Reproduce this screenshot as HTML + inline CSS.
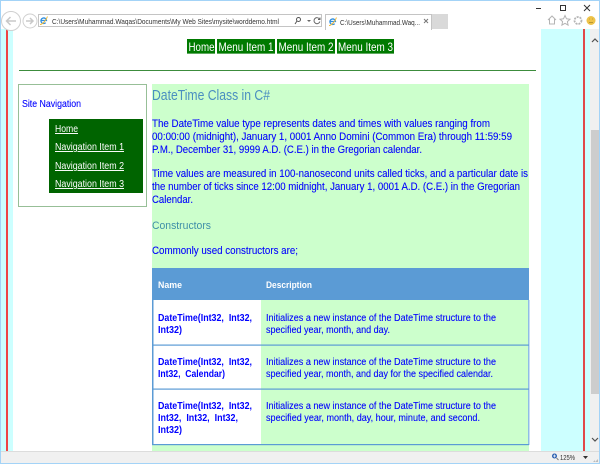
<!DOCTYPE html>
<html><head><meta charset="utf-8"><title>worddemo</title>
<style>
html,body{margin:0;padding:0;background:#fff;overflow:hidden}
svg{display:block;width:600px;height:464px}
text{font-family:"Liberation Sans",sans-serif;white-space:pre}
.p{font-size:11.2px;fill:#0000ff;stroke:#0000ff;stroke-width:.1px}
.t{font-size:9.7px;fill:#0000ff;stroke:#0000ff;stroke-width:.1px}
.b{font-size:9.7px;fill:#0000ff;font-weight:bold}
.n{font-size:9.7px;fill:#fff;text-decoration:underline}
.m{font-size:12px;fill:#fff}
.h{fill:#5b9bd5}
.c{font-size:7.5px;fill:#333}
</style></head><body>
<svg xmlns="http://www.w3.org/2000/svg" width="600" height="464" viewBox="0 0 600 464">
<rect width="600" height="464" fill="#fff"/>
<!-- page bands -->
<rect x="1" y="29" width="12" height="422" fill="#ccffff"/>
<rect x="6" y="29" width="2" height="422" fill="#ef4444"/>
<rect x="541" y="29" width="49" height="422" fill="#ccffff"/>
<rect x="583" y="29" width="2" height="422" fill="#e04848"/>
<!-- scrollbar -->
<rect x="590" y="29" width="10" height="422" fill="#f0f0f0"/>
<rect x="591" y="130" width="9" height="264" fill="#cdcdcd"/>
<path d="M592 42l3-3 3 3" fill="none" stroke="#505050" stroke-width="1.2"/>
<path d="M592 438l3 3 3-3" fill="none" stroke="#505050" stroke-width="1.2"/>
<!-- window border -->
<rect width="600" height="1" fill="#a3d3f7"/>
<rect width="1" height="464" fill="#a3d3f7"/>
<rect x="599" width="1" height="464" fill="#a3d3f7"/>
<rect y="463" width="600" height="1" fill="#a3d3f7"/>
<!-- title buttons -->
<path d="M536 8.500h5" stroke="#333" stroke-width="1"/>
<rect x="560.500" y="5.500" width="5" height="5" fill="none" stroke="#333" stroke-width="1"/>
<path d="M584 5l6 6M590 5l-6 6" stroke="#333" stroke-width="1"/>
<!-- nav buttons -->
<circle cx="11" cy="21" r="9.500" fill="#fff" stroke="#d0d0d0"/>
<path d="M16 21H7M10.500 17l-4 4 4 4" fill="none" stroke="#c8c8c8" stroke-width="1.500"/>
<circle cx="30" cy="21" r="7" fill="#fff" stroke="#d0d0d0"/>
<path d="M26 21h7M30 18l3 3-3 3" fill="none" stroke="#c8c8c8" stroke-width="1.500"/>
<!-- address bar -->
<rect x="38.500" y="14.500" width="283" height="12" fill="#fff" stroke="#c4c4c4"/>
<path d="M41 20.500h5.500a2.800 2.800 0 1 0-.8 2.200" fill="none" stroke="#2f8fe0" stroke-width="1.300"/>
<path d="M40 24.500c2.500 0 6-4 7.500-8" fill="none" stroke="#f0b93a"/>
<text x="52" y="24" class="c" textLength="227" lengthAdjust="spacingAndGlyphs">C:\Users\Muhammad.Waqas\Documents\My Web Sites\mysite\worddemo.html</text>
<circle cx="298.500" cy="19.500" r="2" fill="none" stroke="#555"/>
<path d="M297 21l-2 3" stroke="#555"/>
<path d="M307 20l2 2 2-2z" fill="#666"/>
<path d="M319.500 19a3 3 0 1 0 .4 2.500M320 17.500v2h-2" fill="none" stroke="#666"/>
<!-- tab -->
<rect x="325.500" y="14.500" width="106" height="15" fill="#fff" stroke="#c4c4c4"/>
<rect x="326" y="27" width="105" height="3" fill="#fff"/>
<rect x="432" y="14" width="16" height="15" fill="#d9d9d9"/>
<path d="M330 21.500h5.500a2.800 2.800 0 1 0-.8 2.200" fill="none" stroke="#2f8fe0" stroke-width="1.300"/>
<path d="M329 25.500c2.500 0 6-4 7.500-8" fill="none" stroke="#f0b93a"/>
<text x="340" y="25" class="c" textLength="80" lengthAdjust="spacingAndGlyphs">C:\Users\Muhammad.Waq...</text>
<path d="M424 19l4 4M428 19l-4 4" stroke="#777"/>
<!-- toolbar icons -->
<path d="M548 20l4-4 4 4M549.500 19v5h5v-5" fill="none" stroke="#b4b4b4"/>
<path d="M565 15.500l1.500 3.300 3.500.4-2.600 2.400.7 3.500-3.100-1.800-3.100 1.800.7-3.500-2.600-2.400 3.500-.4z" fill="none" stroke="#b4b4b4"/>
<circle cx="578" cy="20.500" r="3.500" fill="none" stroke="#b4b4b4" stroke-width="1.800" stroke-dasharray="2 1"/>
<circle cx="591" cy="20.500" r="4.500" fill="#eec34a"/>
<path d="M589 19h.8M592 19h.8M589 22.500h4" stroke="#a98a2a" stroke-width=".8"/>
<!-- top menu -->
<g>
<rect x="187" y="39" width="28" height="15" fill="#007a00"/><rect x="187" y="53" width="28" height="1" fill="#5fa85f"/>
<rect x="217" y="39" width="58" height="15" fill="#007a00"/><rect x="217" y="53" width="58" height="1" fill="#5fa85f"/>
<rect x="277" y="39" width="58" height="15" fill="#007a00"/><rect x="277" y="53" width="58" height="1" fill="#5fa85f"/>
<rect x="337" y="39" width="57" height="15" fill="#007a00"/><rect x="337" y="53" width="57" height="1" fill="#5fa85f"/>
<text x="188.500" y="51" class="m" textLength="26" lengthAdjust="spacingAndGlyphs">Home</text>
<text x="218.500" y="51" class="m" textLength="55" lengthAdjust="spacingAndGlyphs">Menu Item 1</text>
<text x="278.500" y="51" class="m" textLength="55" lengthAdjust="spacingAndGlyphs">Menu Item 2</text>
<text x="338" y="51" class="m" textLength="55" lengthAdjust="spacingAndGlyphs">Menu Item 3</text>
</g>
<rect x="19" y="70" width="517" height="1" fill="#3c8c3c"/>
<!-- side nav -->
<rect x="18.500" y="84.500" width="128" height="122" fill="#fff" stroke="#2f7f2f" stroke-dasharray="1 1"/>
<text x="22" y="107" class="t" textLength="59" lengthAdjust="spacingAndGlyphs">Site Navigation</text>
<rect x="49" y="119" width="94" height="74" fill="#006400"/>
<text x="55" y="132" class="n" textLength="23" lengthAdjust="spacingAndGlyphs">Home</text>
<text x="55" y="150" class="n" textLength="69" lengthAdjust="spacingAndGlyphs">Navigation Item 1</text>
<text x="55" y="169" class="n" textLength="69" lengthAdjust="spacingAndGlyphs">Navigation Item 2</text>
<text x="55" y="187" class="n" textLength="69" lengthAdjust="spacingAndGlyphs">Navigation Item 3</text>
<!-- content -->
<rect x="152" y="84" width="377" height="367" fill="#ccffcc"/>
<text x="152" y="100" font-size="14.500" fill="#4a8fc0" textLength="118" lengthAdjust="spacingAndGlyphs">DateTime Class in C#</text>
<text x="152" y="127" class="p" textLength="338" lengthAdjust="spacingAndGlyphs">The DateTime value type represents dates and times with values ranging from</text>
<text x="152" y="140" class="p" textLength="360" lengthAdjust="spacingAndGlyphs">00:00:00 (midnight), January 1, 0001 Anno Domini (Common Era) through 11:59:59</text>
<text x="152" y="153" class="p" textLength="270" lengthAdjust="spacingAndGlyphs">P.M., December 31, 9999 A.D. (C.E.) in the Gregorian calendar.</text>
<text x="152" y="177" class="p" textLength="376" lengthAdjust="spacingAndGlyphs">Time values are measured in 100-nanosecond units called ticks, and a particular date is</text>
<text x="152" y="190" class="p" textLength="368" lengthAdjust="spacingAndGlyphs">the number of ticks since 12:00 midnight, January 1, 0001 A.D. (C.E.) in the Gregorian</text>
<text x="152" y="203" class="p" textLength="41" lengthAdjust="spacingAndGlyphs">Calendar.</text>
<text x="152" y="229" font-size="11" fill="#3f8fa8" textLength="59" lengthAdjust="spacingAndGlyphs">Constructors</text>
<text x="152" y="254" class="p" textLength="146" lengthAdjust="spacingAndGlyphs">Commonly used constructors are;</text>
<!-- table -->
<rect x="152" y="268" width="377" height="32" fill="#5b9bd5"/>
<rect x="153" y="300" width="108" height="144" fill="#fff"/>
<rect x="152" y="300" width="1.500" height="145" fill="#5b9bd5"/>
<rect x="528" y="300" width="1.500" height="145" fill="#8fbce6"/>
<rect x="152" y="344.500" width="377" height="1.200" class="h"/>
<rect x="152" y="388.500" width="377" height="1.200" class="h"/>
<rect x="152" y="444" width="377" height="1.200" class="h"/>
<text x="158" y="288" font-size="9.500" font-weight="bold" fill="#fff" textLength="24" lengthAdjust="spacingAndGlyphs">Name</text>
<text x="266" y="288" font-size="9.500" font-weight="bold" fill="#fff" textLength="46" lengthAdjust="spacingAndGlyphs">Description</text>
<text x="158" y="321" class="b" textLength="94" lengthAdjust="spacingAndGlyphs">DateTime(Int32,  Int32,</text>
<text x="158" y="333" class="b" textLength="24" lengthAdjust="spacingAndGlyphs">Int32)</text>
<text x="158" y="365" class="b" textLength="94" lengthAdjust="spacingAndGlyphs">DateTime(Int32,  Int32,</text>
<text x="158" y="377" class="b" textLength="67" lengthAdjust="spacingAndGlyphs">Int32,  Calendar)</text>
<text x="158" y="409" class="b" textLength="94" lengthAdjust="spacingAndGlyphs">DateTime(Int32,  Int32,</text>
<text x="158" y="421" class="b" textLength="80" lengthAdjust="spacingAndGlyphs">Int32,  Int32,  Int32,</text>
<text x="158" y="433" class="b" textLength="24" lengthAdjust="spacingAndGlyphs">Int32)</text>
<text x="266" y="321" class="t" textLength="230" lengthAdjust="spacingAndGlyphs">Initializes a new instance of the DateTime structure to the</text>
<text x="266" y="333" class="t" textLength="124" lengthAdjust="spacingAndGlyphs">specified year, month, and day.</text>
<text x="266" y="365" class="t" textLength="230" lengthAdjust="spacingAndGlyphs">Initializes a new instance of the DateTime structure to the</text>
<text x="266" y="377" class="t" textLength="227" lengthAdjust="spacingAndGlyphs">specified year, month, and day for the specified calendar.</text>
<text x="266" y="409" class="t" textLength="230" lengthAdjust="spacingAndGlyphs">Initializes a new instance of the DateTime structure to the</text>
<text x="266" y="421" class="t" textLength="214" lengthAdjust="spacingAndGlyphs">specified year, month, day, hour, minute, and second.</text>
<!-- status bar -->
<rect x="1" y="451" width="598" height="12" fill="#f0f0f0"/>
<rect x="1" y="451" width="598" height="1" fill="#dcdcdc"/>
<circle cx="554.500" cy="456" r="2.500" fill="#2a5fb0"/>
<path d="M553 456h3M554.500 454.500v3" stroke="#fff" stroke-width=".7"/>
<path d="M556.500 458l2 2" stroke="#777"/>
<text x="560" y="460" class="c" textLength="15" lengthAdjust="spacingAndGlyphs">125%</text>
<path d="M583 456h5l-2.500 3z" fill="#333"/>
<path d="M598 459v3h-3zM595 462h-2l2-2z" fill="#bbb"/>
</svg>
</body></html>
